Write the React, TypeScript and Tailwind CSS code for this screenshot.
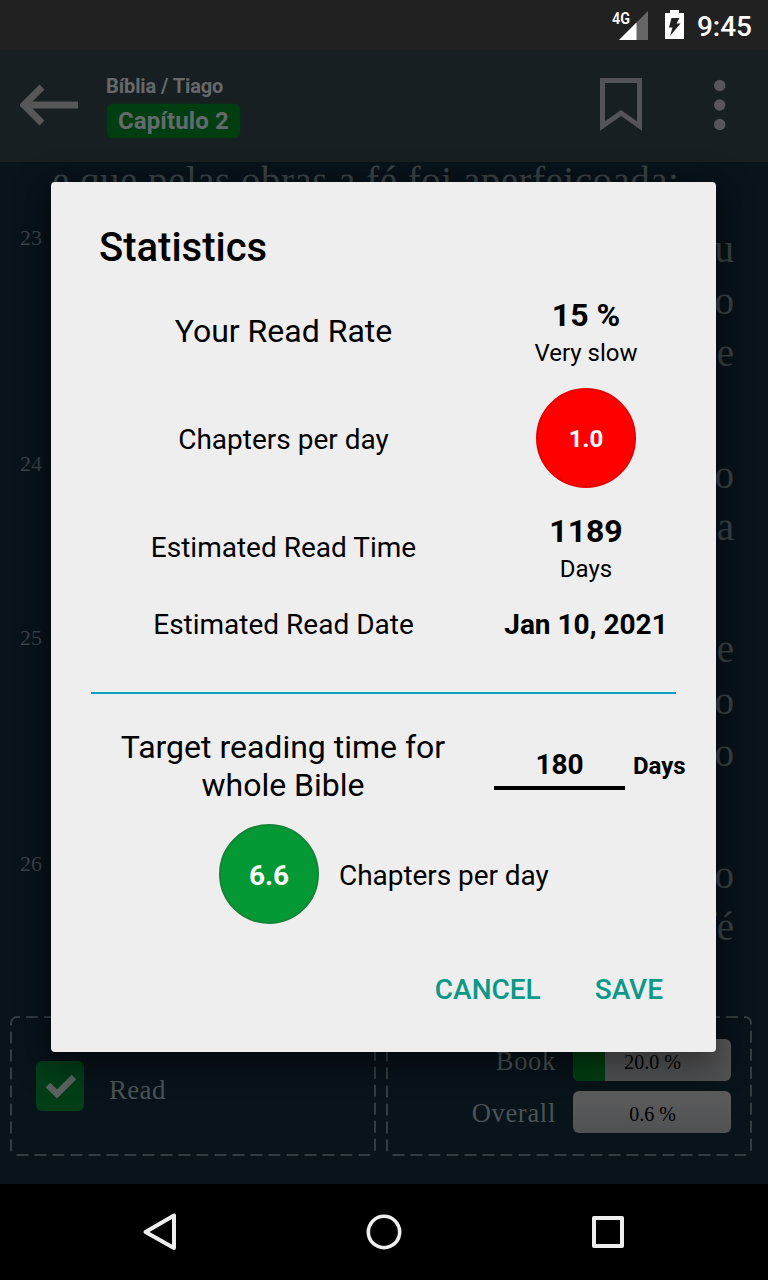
import type { ReactNode } from 'react'

type Verse = {
  number: string
  lineEnds: string[]
}

const VERSES: Verse[] = [
  { number: '23', lineEnds: ['u', 'o', 'e', ''] },
  { number: '24', lineEnds: ['o', 'a', ''] },
  { number: '25', lineEnds: ['e', 'o', 'o', ''] },
  { number: '26', lineEnds: ['o', 'fé'] },
]

function StatusBar() {
  return (
    <div className="flex h-[50px] shrink-0 items-center justify-end bg-[#212121] pr-4 text-white">
      <svg width="38" height="50" viewBox="0 0 38 50" className="mr-4">
        <path d="M37 11V40H8Z" fill="#666" />
        <path d="M25.500 22.500V40H8Z" fill="#fff" />
        <text
          x="1"
          y="23.500"
          fill="#fff"
          fontFamily="Roboto, sans-serif"
          fontSize="17"
          fontWeight="600"
          textLength="18"
          lengthAdjust="spacingAndGlyphs"
        >
          4G
        </text>
      </svg>
      <svg width="20" height="50" viewBox="0 0 20 50" className="mr-3">
        <path d="M5 10H14V13H19V39H0V13H5Z" fill="#fff" />
        <path d="M6.500 18H14.500L11.500 23.500H15.500L5 36L7.500 27.500H4Z" fill="#212121" />
      </svg>
      <span className="pt-0.5 text-[28px] leading-[33px] font-medium">9:45</span>
    </div>
  )
}

function Toolbar() {
  return (
    <div className="flex h-28 shrink-0 items-center bg-[#181f22] pb-[3px] pl-5">
      <svg width="58" height="42" viewBox="0 0 58 42" fill="none" stroke="#555759" strokeWidth="7">
        <path d="M22 3L4 21L22 39M4 21H58" />
      </svg>
      <div className="ml-7 flex flex-col items-start pt-[3px] text-[#66696b]">
        <div className="text-[20px] leading-6 font-bold tracking-[-0.1px]">Bíblia / Tiago</div>
        <div className="mt-[6px] ml-px flex h-[34px] items-center rounded-md bg-[#003e12] px-[11px] text-[24px] font-bold tracking-[0.1px] shadow-[0_0_2px_#003e12]">
          Capítulo 2
        </div>
      </div>
      <svg width="42" height="54" viewBox="0 0 42 54" className="mr-[72px] ml-auto" fill="none" stroke="#535457" strokeWidth="5">
        <path d="M2.500 2.500H39.500V48L21 35L2.500 48Z" />
      </svg>
      <svg width="12" height="52" viewBox="0 0 12 52" className="mr-[42px]" fill="#555759">
        <circle cx="5.700" cy="6.500" r="5.700" />
        <circle cx="5.700" cy="26" r="5.700" />
        <circle cx="5.700" cy="45.500" r="5.700" />
      </svg>
    </div>
  )
}

function Reader() {
  return (
    <div className="h-[854px] shrink-0 overflow-hidden pr-[34px] pl-5 font-['Liberation_Serif',serif] text-[#3c4447]">
      <div className="-mt-[7px] mb-4 h-[52px] pl-8 text-[39px] leading-[52px] tracking-[0.5px] whitespace-nowrap">
        e que pelas obras a fé foi aperfeiçoada;
      </div>
      {VERSES.map((verse) => (
        <div key={verse.number} className="mb-[18px] flex justify-between">
          <span className="text-[22px] leading-[30px]">{verse.number}</span>
          <div className="text-right text-[39px]">
            {verse.lineEnds.map((end, i) => (
              <div key={i} className="h-[52px] leading-[52px]">
                {end}
              </div>
            ))}
          </div>
        </div>
      ))}
    </div>
  )
}

function DashedCard({ children }: { children: ReactNode }) {
  return (
    <div className="relative h-[140px] w-[366px]">
      <svg width="366" height="140" className="absolute inset-0" fill="none" stroke="#343c3f" strokeWidth="2">
        <rect x="1" y="1" width="364" height="138" rx="6" strokeDasharray="12 6" strokeDashoffset="-9" />
      </svg>
      {children}
    </div>
  )
}

function ProgressRow({ label, value, percent }: { label: string; value: string; percent: number }) {
  return (
    <div className="flex h-[42px] items-center justify-end gap-[17px]">
      <span className="pt-0.5 text-[26.500px] leading-8 tracking-[0.7px]">{label}</span>
      <div className="relative flex h-[42px] w-[158px] items-center justify-center overflow-hidden rounded-md bg-linear-to-b from-[#5c5c5d] to-[#505152] text-[20px] text-black">
        {percent >= 1 && <div className="absolute inset-y-0 left-0 bg-[#003e12]" style={{ width: `${percent}%` }} />}
        <span className="relative pt-[3px] pl-px">{value}</span>
      </div>
    </div>
  )
}

function Footer() {
  return (
    <div className="flex h-[168px] shrink-0 gap-[10px] pl-[10px] font-['Liberation_Serif',serif] text-[#4b5356]">
      <DashedCard>
        <div className="flex items-center pt-[45px] pl-[26px]">
          <div className="flex h-[50px] w-12 items-center justify-center rounded-md bg-[#003e18]">
            <svg width="32" height="26" viewBox="0 0 32 26" className="ml-0.5" fill="none" stroke="#5c635f" strokeWidth="6.500">
              <path d="M3 12L12 21L29 4" />
            </svg>
          </div>
          <span className="ml-[25px] pt-[7px] text-[27px] leading-8 tracking-[0.3px]">Read</span>
        </div>
      </DashedCard>
      <DashedCard>
        <div className="flex flex-col gap-[10px] pt-[23px] pr-[21px]">
          <ProgressRow label="Book" value="20.0 %" percent={20} />
          <ProgressRow label="Overall" value="0.6 %" percent={0.6} />
        </div>
      </DashedCard>
    </div>
  )
}

function NavigationBar() {
  return (
    <div className="flex h-24 shrink-0 items-center justify-between bg-black px-[140px]">
      <svg width="40" height="40" viewBox="0 0 40 40" fill="none" stroke="#eee" strokeWidth="4" strokeLinejoin="round">
        <path d="M34 3.500V36L5.500 20Z" />
      </svg>
      <svg width="40" height="40" viewBox="0 0 40 40" fill="none" stroke="#eee" strokeWidth="3.600">
        <circle cx="20" cy="20" r="15.700" />
      </svg>
      <svg width="40" height="40" viewBox="0 0 40 40" fill="none" stroke="#eee" strokeWidth="4" strokeLinejoin="round">
        <rect x="6" y="6" width="28" height="28" />
      </svg>
    </div>
  )
}

function StatRow({ label, className, children }: { label: string; className: string; children: ReactNode }) {
  return (
    <div className={`flex items-center ${className}`}>
      <div className="w-96 pl-px text-center">{label}</div>
      <div className="ml-[21px] flex w-[180px] flex-col items-center whitespace-nowrap">{children}</div>
    </div>
  )
}

function StatisticsDialog() {
  return (
    <div
      role="dialog"
      className="absolute top-[182px] left-[51px] flex h-[870px] w-[665px] flex-col rounded bg-[#eee] pr-[30px] pl-10 pt-[42px] text-[28px] leading-[34px] text-black shadow-[0_8px_32px_6px_rgba(0,0,0,0.45)]"
    >
      <h1 className="pl-2 text-[40px] leading-[47px] font-medium">Statistics</h1>

      <StatRow label="Your Read Rate" className="mt-[25px] h-[70px] text-[32px]">
        <div className="leading-[38px] font-bold">15 %</div>
        <div className="mt-1 pt-0.5 text-[24px] leading-[26px]">Very slow</div>
      </StatRow>
      <StatRow label="Chapters per day" className="mt-[23px] -mb-px h-[102px]">
        <div className="-mt-1 flex size-[100px] items-center justify-center rounded-full border-2 border-[#e60000] bg-[#ff0000] pt-0.5 text-[24px] font-bold text-white">
          1.0
        </div>
      </StatRow>
      <StatRow label="Estimated Read Time" className="mt-[22px] h-[72px]">
        <div className="-mt-0.5 text-[32px] leading-[38px] font-bold">1189</div>
        <div className="mt-1 pt-0.5 text-[24px] leading-[26px]">Days</div>
      </StatRow>
      <StatRow label="Estimated Read Date" className="mt-6 h-[34px]">
        <div className="font-bold">Jan 10, 2021</div>
      </StatRow>

      <div className="mt-[50px] mr-[10px] h-0.5 shrink-0 bg-[#109fc0]" />

      <div className="mt-[34px] flex h-[76px]">
        <div className="w-96 shrink-0 px-6 text-center text-[32px] leading-[38px]">
          Target reading time for whole Bible
        </div>
        <div className="ml-[19px] h-[62px] w-[131px] shrink-0 border-b-4 border-black pt-5 text-center font-bold">
          180
        </div>
        <div className="ml-2 pt-[21px] text-[24px] font-bold">Days</div>
      </div>

      <div className="mt-5 flex items-center pl-32">
        <div className="flex size-[100px] items-center justify-center rounded-full border-2 border-[#158338] bg-[#049935] pt-1 font-bold text-white">
          6.6
        </div>
        <div className="ml-5 pt-[3px] tracking-[-0.05px]">Chapters per day</div>
      </div>

      <div className="mt-[49px] flex justify-end gap-[54px] pr-[23px] font-medium text-[#0b9888]">
        <button>CANCEL</button>
        <button>SAVE</button>
      </div>
    </div>
  )
}

export default function App() {
  return (
    <div className="relative flex h-[1280px] w-[768px] flex-col overflow-hidden bg-[#08131a] font-['Roboto',sans-serif]">
      <StatusBar />
      <Toolbar />
      <Reader />
      <Footer />
      <NavigationBar />
      <StatisticsDialog />
    </div>
  )
}
